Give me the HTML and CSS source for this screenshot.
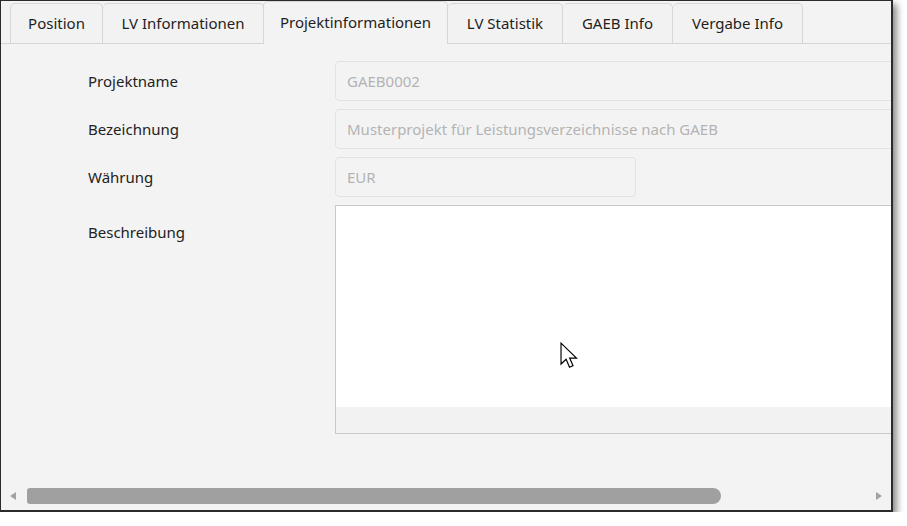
FILE: index.html
```html
<!DOCTYPE html>
<html lang="de">
<head>
    <meta charset="UTF-8">
    <title>Projektinformationen</title>
    <link rel="stylesheet" href="styles.css">
</head>
<body>

    <div class="window">
        <div class="tabs">
            <div class="tab tab-position">Position</div>
            <div class="tab tab-lvinfo">LV Informationen</div>
            <div class="tab tab-projekt active">Projektinformationen</div>
            <div class="tab tab-statistik">LV Statistik</div>
            <div class="tab tab-gaeb">GAEB Info</div>
            <div class="tab tab-vergabe">Vergabe Info</div>
        </div>

        <div class="panel">
            <div class="form">
                <label class="field-label">Projektname</label>
                <div class="field wide">GAEB0002</div>

                <label class="field-label">Bezeichnung</label>
                <div class="field wide">Musterprojekt für Leistungsverzeichnisse nach GAEB</div>

                <label class="field-label">Währung</label>
                <div class="field short">EUR</div>

                <label class="field-label top">Beschreibung</label>
                <div class="memo">
                    <div class="memo-text"></div>
                    <div class="memo-footer"></div>
                </div>
            </div>

            <div class="hscroll">
                <span class="arrow arrow-left"></span>
                <div class="track">
                    <div class="thumb"></div>
                </div>
                <span class="arrow arrow-right"></span>
            </div>

            <!-- mouse pointer over the memo -->
            <svg class="cursor" width="19" height="28" viewBox="0 0 13 19">
                <path d="M0.7 0.7 L0.7 15 L4.2 11.7 L6.5 17.2 L8.9 16.2 L6.6 10.9 L11.3 10.9 Z" fill="#fff" stroke="#000" stroke-width="0.8" stroke-linejoin="miter"/>
            </svg>
        </div>
    </div>

</body>
</html>
```

FILE: styles.css
```css
body {
    margin: 0;
    background: #fff;
    font-family: 'Noto Sans', 'Open Sans', sans-serif;
    font-size: 15px;
    color: #1e1e1e;
}

/* Screenshot frame with drop shadow */
.window {
    position: relative;
    width: 890px;
    height: 509px;
    border: 1px solid #2b2b2b;
    border-right-width: 2px;
    border-bottom-width: 2px;
    background: #f3f3f3;
    overflow: hidden;
    box-shadow: 4px 4px 7px rgba(0, 0, 0, 0.45);
    display: flex;
    flex-direction: column;
}

/* Tab strip */
.tabs {
    display: flex;
    align-items: flex-end;
    padding-left: 9px;
    border-bottom: 1px solid #d6d6d6;
    box-sizing: border-box;
    height: 43px;
}

.tab {
    height: 40px;
    box-sizing: border-box;
    display: flex;
    align-items: center;
    justify-content: center;
    padding-bottom: 2px;
    border: 1px solid #d6d6d6;
    border-bottom: none;
    border-left: none;
    border-radius: 5px 5px 0 0;
    background: #f2f2f2;
    color: #1e1e1e;
    white-space: nowrap;
}

.tab:first-child {
    border-left: 1px solid #d6d6d6;
}

.tab.active {
    height: 43px;
    margin-bottom: -1px;
    background: #f3f3f3;
    border-left: 1px solid #d6d6d6;
    padding-bottom: 2px;
    position: relative;
    z-index: 1;
}

.tab-position { width: 93px; }
.tab-lvinfo { width: 161px; }
.tab-projekt { width: 185px; margin-left: -1px; }
.tab-statistik { width: 115px; }
.tab-gaeb { width: 110px; }
.tab-vergabe { width: 130px; }

/* Content */
.panel {
    flex: 1;
    display: flex;
    flex-direction: column;
    position: relative;
}

.form {
    display: grid;
    grid-template-columns: 247px 640px;
    grid-auto-rows: 40px;
    row-gap: 8px;
    padding: 17px 0 0 87px;
}

.field-label {
    display: flex;
    align-items: center;
    color: #222;
}

.field-label.top {
    align-items: flex-start;
    padding-top: 17px;
}

.field {
    box-sizing: border-box;
    border: 1px solid #e2e2e2;
    border-radius: 4px;
    padding: 0 11px;
    display: flex;
    align-items: center;
    color: #b3b3b3;
    white-space: nowrap;
}

.field.wide {
    width: 640px;
}

.field.short {
    width: 301px;
}

.memo {
    height: 229px;
    box-sizing: border-box;
    border: 1px solid #c9c9c9;
    border-right: none;
    display: flex;
    flex-direction: column;
}

.memo-text {
    height: 201px;
    background: #fff;
}

.memo-footer {
    flex: 1;
    background: #f2f2f2;
}

/* Horizontal scrollbar */
.hscroll {
    margin-top: auto;
    height: 16px;
    margin-bottom: 6px;
    display: flex;
    align-items: center;
    padding: 0 9px;
}

.arrow {
    width: 0;
    height: 0;
    border-top: 4px solid transparent;
    border-bottom: 4px solid transparent;
}

.arrow-left {
    border-right: 6px solid #a2a2a2;
}

.arrow-right {
    border-left: 6px solid #a2a2a2;
    margin-left: auto;
}

.track {
    flex: 1;
    height: 16px;
    padding-left: 11px;
}

.thumb {
    width: 694px;
    height: 16px;
    background: #a0a0a0;
    border-radius: 3px 8px 8px 3px;
}

.cursor {
    position: absolute;
    left: 559px;
    top: 298px;
}
```
